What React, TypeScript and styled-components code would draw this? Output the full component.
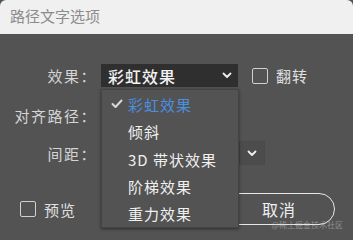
import React from "react";
import styled, { createGlobalStyle } from "styled-components";

const Global = createGlobalStyle`
  html, body { margin: 0; padding: 0; background: #535353; }
  body { font-family: "Noto Sans CJK SC", "Noto Sans", sans-serif; }
`;

const Dialog = styled.div`
  width: 353px;
  height: 240px;
  background: #535353;
  position: relative;
  overflow: hidden;
  color: #dcdcdc;
`;

const TitleBar = styled.div`
  height: 34px;
  background: #f0f0f0;
  color: #8c8c8c;
  font-size: 15px;
  line-height: 32px;
  padding-left: 10px;
  border-radius: 6px 6px 0 0;
`;

const Body = styled.div`
  display: flex;
  flex-direction: column;
  padding-top: 30px;
`;

const Row = styled.div<{ $h: number; $mt?: number }>`
  display: flex;
  align-items: center;
  height: ${(p) => p.$h}px;
  margin-top: ${(p) => p.$mt ?? 0}px;
`;

const Label = styled.div`
  width: 101px;
  text-align: right;
  font-size: 15px;
  color: #d4d4d4;
  letter-spacing: 1.5px;
  padding-right: 4px;
  box-sizing: border-box;
`;

const SelectBox = styled.div`
  position: relative;
  width: 137px;
  height: 23px;
  background: #2f2f2f;
  display: flex;
  align-items: center;
  justify-content: space-between;
  padding: 0 6px 0 7px;
  box-sizing: border-box;
  color: #f2f2f2;
  font-size: 16px;
  font-weight: 500;
  letter-spacing: 1px;
`;

const SpacingBox = styled.div`
  width: 164px;
  height: 24px;
  border: 1px solid #4a4a4a;
  box-sizing: border-box;
  display: flex;
  justify-content: flex-end;
`;

const ChevBtn = styled.div`
  width: 24px;
  height: 22px;
  background: #4c4c4c;
  border-left: 1px solid #444;
  display: flex;
  align-items: center;
  justify-content: center;
`;

const Check = styled.label<{ $ml?: number }>`
  display: flex;
  align-items: center;
  gap: 8px;
  margin-left: ${(p) => p.$ml ?? 0}px;
  font-size: 15px;
  color: #e0e0e0;
  letter-spacing: 1px;
`;

const Box = styled.span`
  width: 14px;
  height: 14px;
  border: 1px solid #d0d0d0;
  border-radius: 2px;
  display: inline-block;
`;

const Menu = styled.div`
  position: absolute;
  left: 101px;
  top: 89px;
  width: 138px;
  height: 139px;
  background: #535353;
  border: 1px solid #444;
  box-shadow: 0 1px 3px rgba(0, 0, 0, 0.45);
  box-sizing: border-box;
  padding-top: 1px;
  display: flex;
  flex-direction: column;
  z-index: 5;
`;

const Item = styled.div<{ $active?: boolean }>`
  height: 27.5px;
  display: flex;
  align-items: center;
  font-size: 15px;
  letter-spacing: 1px;
  color: ${(p) => (p.$active ? "#4b8fe0" : "#f0f0f0")};
  padding-left: 26px;
  position: relative;
`;

const Tick = styled.span`
  position: absolute;
  left: 9px;
  top: 8px;
  display: flex;
`;

const Footer = styled.div`
  display: grid;
  grid-template-columns: 79px 120px 112px;
  column-gap: 2px;
  align-items: center;
  margin-top: 28px;
  padding-left: 20px;
  height: 32px;
`;

const Pill = styled.div`
  height: 32px;
  border: 1.5px solid #e8e8e8;
  border-radius: 16px;
  box-sizing: border-box;
  display: flex;
  align-items: center;
  justify-content: center;
  font-size: 16px;
  color: #f0f0f0;
  letter-spacing: 1px;
`;

const Watermark = styled.div`
  position: absolute;
  right: 10px;
  bottom: 10px;
  font-size: 8px;
  color: rgba(200, 200, 200, 0.55);
  z-index: 6;
`;

const Chevron = ({ c = "#f0f0f0" }: { c?: string }) => (
  <svg width="10" height="7" viewBox="0 0 10 7">
    <path d="M1.5 1.5 L5 5 L8.5 1.5" fill="none" stroke={c} strokeWidth="1.8" strokeLinecap="round" strokeLinejoin="round" />
  </svg>
);

export default function App() {
  return (
    <Dialog>
      <Global />
      <TitleBar>路径文字选项</TitleBar>
      <Body>
        <Row $h={23}>
          <Label>效果：</Label>
          <SelectBox>
            彩虹效果
            <Chevron />
          </SelectBox>
          <Check $ml={14}>
            <Box />
            翻转
          </Check>
        </Row>
        <Row $h={24} $mt={16}>
          <Label>对齐路径：</Label>
        </Row>
        <Row $h={24} $mt={14}>
          <Label>间距：</Label>
          <SpacingBox>
            <ChevBtn>
              <Chevron />
            </ChevBtn>
          </SpacingBox>
        </Row>
        <Footer>
          <Check>
            <Box />
            预览
          </Check>
          <Pill>确定</Pill>
          <Pill>取消</Pill>
        </Footer>
      </Body>
      <Menu>
        <Item $active>
          <Tick>
            <svg width="12" height="10" viewBox="0 0 12 10">
              <path d="M1.5 5 L4.5 8 L10.5 1.5" fill="none" stroke="#d8d8d8" strokeWidth="2" strokeLinecap="round" strokeLinejoin="round" />
            </svg>
          </Tick>
          彩虹效果
        </Item>
        <Item>倾斜</Item>
        <Item>3D 带状效果</Item>
        <Item>阶梯效果</Item>
        <Item>重力效果</Item>
      </Menu>
      <Watermark>@稀土掘金技术社区</Watermark>
    </Dialog>
  );
}
